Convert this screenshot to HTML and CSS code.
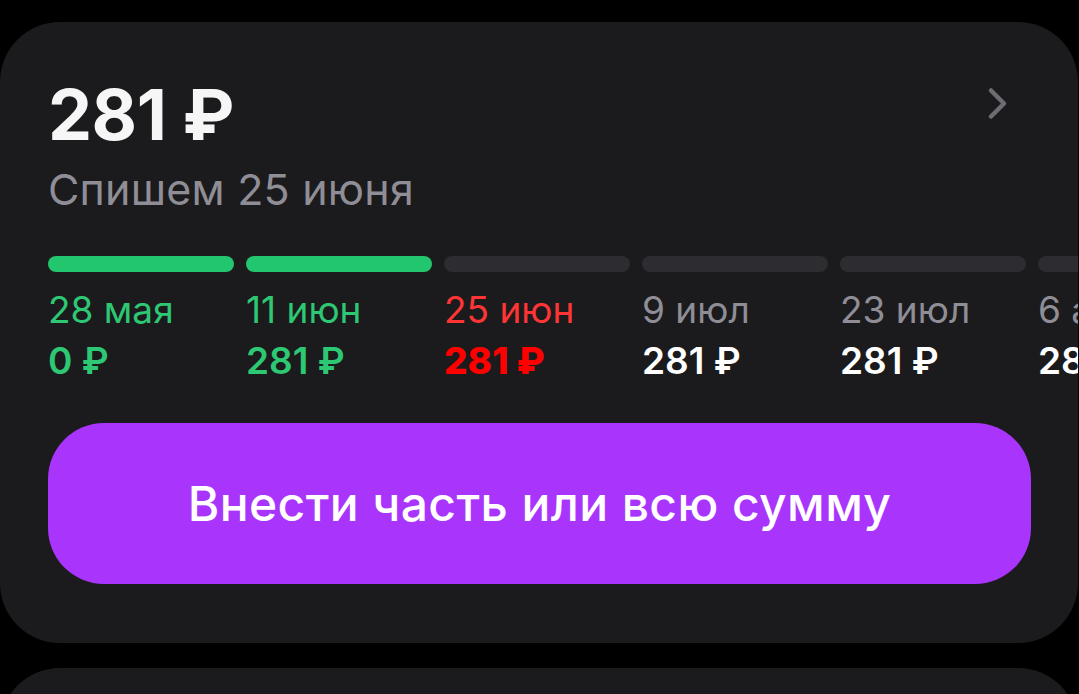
FILE: index.html
```html
<!DOCTYPE html>
<html lang="ru">
<head>
<meta charset="utf-8">
<link rel="stylesheet" href="styles.css">
</head>
<body>
<div class="card">
  <div class="header">
    <div class="titles">
      <div class="amount">281 ₽</div>
      <div class="subtitle">Спишем 25 июня</div>
    </div>
    <svg class="chevron" width="22" height="34" viewBox="0 0 22 34">
      <path d="M4 3.5 L17 16.5 L4 29.5" fill="none" stroke="#6d6c73" stroke-width="4.5" stroke-linecap="round" stroke-linejoin="round"/>
    </svg>
  </div>
  <div class="timeline">
    <div class="step paid">
      <div class="bar"></div>
      <div class="date">28 мая</div>
      <div class="sum">0 ₽</div>
    </div>
    <div class="step paid">
      <div class="bar"></div>
      <div class="date">11 июн</div>
      <div class="sum">281 ₽</div>
    </div>
    <div class="step current">
      <div class="bar"></div>
      <div class="date">25 июн</div>
      <div class="sum">281 ₽</div>
    </div>
    <div class="step">
      <div class="bar"></div>
      <div class="date">9 июл</div>
      <div class="sum">281 ₽</div>
    </div>
    <div class="step">
      <div class="bar"></div>
      <div class="date">23 июл</div>
      <div class="sum">281 ₽</div>
    </div>
    <div class="step">
      <div class="bar"></div>
      <div class="date">6 авг</div>
      <div class="sum">281 ₽</div>
    </div>
  </div>
  <button class="pay">Внести часть или всю сумму</button>
</div>
<div class="card next"></div>
</body>
</html>
```

FILE: styles.css
```css
html, body {
  margin: 0;
  padding: 0;
  background: #000;
  height: 100%;
  overflow: hidden;
}
body {
  font-family: Inter, "Noto Sans", sans-serif;
  color: #fff;
}
.card {
  margin-top: 22px;
  width: 1078px;
  box-sizing: border-box;
  background: #1b1b1d;
  border-radius: 60px;
  padding: 58px 0 59px 48px;
  overflow: hidden;
}
.card.next {
  margin-top: 25px;
  height: 200px;
  padding: 0;
}
.header {
  display: flex;
  justify-content: space-between;
  align-items: flex-start;
  padding-right: 69px;
}
.amount {
  font-size: 70px;
  line-height: 70px;
  font-weight: 700;
  letter-spacing: -0.5px;
  color: #f6f6f7;
}
.subtitle {
  margin-top: 18px;
  font-size: 43px;
  line-height: 42px;
  letter-spacing: 0.2px;
  color: #8f8e96;
}
.chevron {
  margin-top: 7px;
  display: block;
}
.timeline {
  display: flex;
  gap: 12px;
  margin-top: 46px;
}
.step {
  flex: 0 0 186px;
}
.bar {
  height: 16px;
  border-radius: 8px;
  background: #2d2d31;
}
.date {
  margin-top: 20px;
  font-size: 37px;
  line-height: 36px;
  color: #8f8e96;
  white-space: nowrap;
}
.sum {
  margin-top: 15px;
  font-size: 37px;
  line-height: 36px;
  font-weight: 600;
  color: #fff;
  white-space: nowrap;
}
.step.paid .bar { background: #22c66f; }
.step.paid .date, .step.paid .sum { color: #2ec774; }
.step.current .date { color: #ff3535; }
.step.current .sum { color: #ff0000; font-weight: 800; }
.pay {
  display: block;
  margin-top: 44px;
  width: 983px;
  height: 161px;
  border: none;
  border-radius: 56px;
  background: #a935fc;
  color: #fff;
  font-family: Inter, "Noto Sans", sans-serif;
  font-size: 48px;
  font-weight: 500;
  letter-spacing: 0.4px;
  padding: 0;
  cursor: pointer;
}
```
